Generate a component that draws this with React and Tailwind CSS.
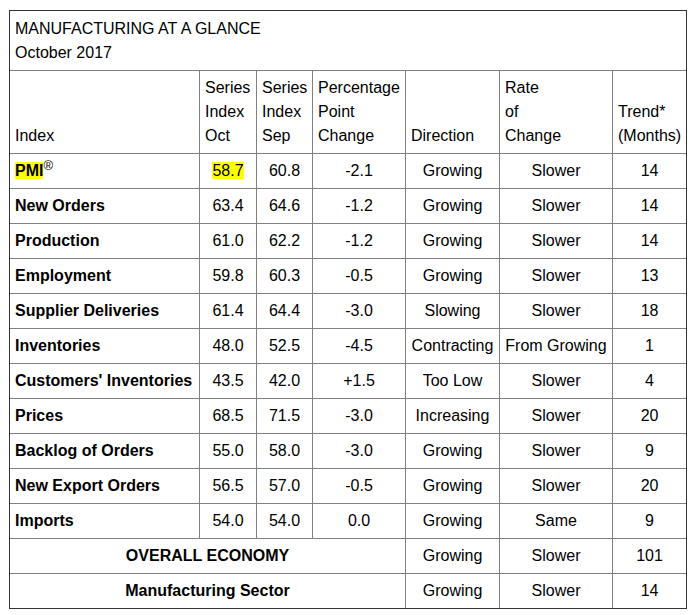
const rows = [
  ["PMI", "58.7", "60.8", "-2.1", "Growing", "Slower", "14"],
  ["New Orders", "63.4", "64.6", "-1.2", "Growing", "Slower", "14"],
  ["Production", "61.0", "62.2", "-1.2", "Growing", "Slower", "14"],
  ["Employment", "59.8", "60.3", "-0.5", "Growing", "Slower", "13"],
  ["Supplier Deliveries", "61.4", "64.4", "-3.0", "Slowing", "Slower", "18"],
  ["Inventories", "48.0", "52.5", "-4.5", "Contracting", "From Growing", "1"],
  ["Customers' Inventories", "43.5", "42.0", "+1.5", "Too Low", "Slower", "4"],
  ["Prices", "68.5", "71.5", "-3.0", "Increasing", "Slower", "20"],
  ["Backlog of Orders", "55.0", "58.0", "-3.0", "Growing", "Slower", "9"],
  ["New Export Orders", "56.5", "57.0", "-0.5", "Growing", "Slower", "20"],
  ["Imports", "54.0", "54.0", "0.0", "Growing", "Same", "9"],
];

const summary = [
  ["OVERALL ECONOMY", "Growing", "Slower", "101"],
  ["Manufacturing Sector", "Growing", "Slower", "14"],
];

const cell = "px-[5px] py-[5px] border-b border-[#808080] leading-6";
const mid = cell + " border-r text-center";
const last = cell + " text-center";

export default function App() {
  return (
    <div className="min-h-screen bg-white pl-[9px] pt-[10px] text-black text-[16px] font-['Liberation_Sans',Arial,sans-serif]">
      <div className="w-[678px] border border-[#333333]">
        <table className="w-full table-fixed border-separate border-spacing-0">
          <colgroup>
            <col className="w-[190px]" />
            <col className="w-[57px]" />
            <col className="w-[56px]" />
            <col className="w-[93px]" />
            <col className="w-[94px]" />
            <col className="w-[113px]" />
            <col className="w-[73px]" />
          </colgroup>
          <tbody>
            <tr>
              <td colSpan={7} className="px-[5px] pt-[6px] pb-[5px] leading-6 border-b border-[#808080] text-left">
                MANUFACTURING AT A GLANCE
                <br />
                October 2017
              </td>
            </tr>
            <tr className="align-bottom">
              <td className={cell + " border-r text-left"}>Index</td>
              <td className={cell + " border-r text-left"}>
                Series<br />Index<br />Oct
              </td>
              <td className={cell + " border-r text-left"}>
                Series<br />Index<br />Sep
              </td>
              <td className={cell + " border-r text-left"}>
                Percentage<br />Point<br />Change
              </td>
              <td className={cell + " border-r text-left"}>Direction</td>
              <td className={cell + " border-r text-left"}>
                Rate<br />of<br />Change
              </td>
              <td className={cell + " text-left"}>
                Trend*<br />(Months)
              </td>
            </tr>
            {rows.map((r, i) => (
              <tr key={r[0]} className="align-middle">
                <td className={cell + " border-r text-left font-bold"}>
                  {i === 0 ? (
                    <>
                      <span className="bg-[#ffff00] py-[0px]">PMI</span>
                      <sup className="text-[13px] font-normal">®</sup>
                    </>
                  ) : (
                    r[0]
                  )}
                </td>
                <td className={mid}>
                  {i === 0 ? <span className="bg-[#ffff00]">{r[1]}</span> : r[1]}
                </td>
                <td className={mid}>{r[2]}</td>
                <td className={mid}>{r[3]}</td>
                <td className={mid}>{r[4]}</td>
                <td className={mid}>{r[5]}</td>
                <td className={last}>{r[6]}</td>
              </tr>
            ))}
            {summary.map((s, i) => {
              const b = i === summary.length - 1 ? " border-b-0" : "";
              return (
                <tr key={s[0]} className="align-middle">
                  <td colSpan={4} className={mid + " font-bold" + b}>{s[0]}</td>
                  <td className={mid + b}>{s[1]}</td>
                  <td className={mid + b}>{s[2]}</td>
                  <td className={last + b}>{s[3]}</td>
                </tr>
              );
            })}
          </tbody>
        </table>
      </div>
    </div>
  );
}
